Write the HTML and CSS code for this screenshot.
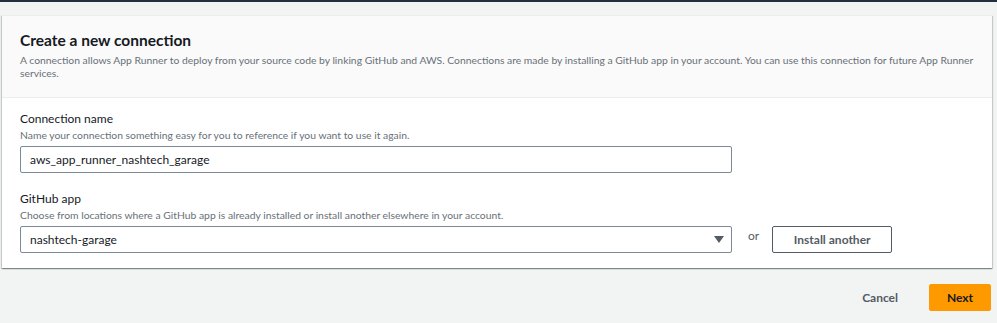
FILE: index.html
```html
<!DOCTYPE html>
<html>
<head>
	<link rel="stylesheet" href="styles.css">
</head>
<body>
<div class="topbar"></div>

<div class="page">
	<div class="card">
		<div class="card-header">
			<h2 class="title">Create a new connection</h2>
			<p class="desc">A connection allows App Runner to deploy from your source code by linking GitHub and AWS. Connections are made by installing a GitHub app in your account. You can use this connection for future App Runner services.</p>
		</div>

		<div class="card-body">
			<div class="field">
				<label class="label" for="conn_name">Connection name</label>
				<div class="hint">Name your connection something easy for you to reference if you want to use it again.</div>
				<input class="input" id="conn_name" type="text" value="aws_app_runner_nashtech_garage">
			</div>

			<div class="field">
				<div class="label">GitHub app</div>
				<div class="hint">Choose from locations where a GitHub app is already installed or install another elsewhere in your account.</div>
				<div class="app-row">
					<div class="select">
						<span>nashtech-garage</span>
						<svg class="caret" width="10" height="7" viewBox="0 0 10 7"><path d="M0 0h10L5 7z" fill="#545b64"/></svg>
					</div>
					<span class="or">or</span>
					<button class="btn btn-normal">Install another</button>
				</div>
			</div>
		</div>
	</div>

	<div class="actions">
		<button class="btn btn-link">Cancel</button>
		<button class="btn btn-primary">Next</button>
	</div>
</div>
</body>
</html>
```

FILE: styles.css
```css
body {
  margin: 0;
  background: #f2f3f3;
  font-family: Lato, "Liberation Sans", sans-serif;
  color: #16191f;
}

.topbar {
  height: 2px;
  background: #232f3e;
}

.page {
  padding: 13px 5px 0 2px;
}

.card {
  background: #fff;
  border-top: 1px solid #eaeded;
  box-shadow: 0 1px 1px 0 rgba(0, 28, 36, .3), 1px 1px 1px 0 rgba(0, 28, 36, .15), -1px 1px 1px 0 rgba(0, 28, 36, .15);
}

.card-header {
  background: #fafafa;
  border-bottom: 1px solid #eaeded;
  padding: 14px 18px 17px;
}

.title {
  margin: 0 0 4px;
  font-size: 15.5px;
  line-height: 20px;
  font-weight: 700;
}

.desc {
  margin: 0;
  font-size: 10.35px;
  line-height: 13px;
  color: #687078;
}

.card-body {
  padding: 12px 18px 15px;
}

.field + .field {
  margin-top: 17px;
}

.label {
  display: block;
  font-size: 12px;
  line-height: 18px;
}

.hint {
  font-size: 10.35px;
  line-height: 14px;
  color: #687078;
  margin-bottom: 4px;
}

.input, .select {
  box-sizing: border-box;
  width: 712px;
  height: 27px;
  border: 1px solid #7d8998;
  border-radius: 2px;
  padding: 0 9px;
  font-family: inherit;
  font-size: 12px;
  color: #16191f;
  background: #fff;
}

.input {
  display: block;
  outline: none;
}

.app-row {
  display: flex;
  align-items: flex-start;
}

.select {
  display: flex;
  align-items: center;
  justify-content: space-between;
  padding-right: 7px;
}

.or {
  font-size: 12px;
  line-height: 20px;
  color: #545b64;
  margin: 0 13px 0 16px;
}

.btn {
  font-family: inherit;
  font-size: 12px;
  font-weight: 700;
  border-radius: 2px;
  height: 27px;
  cursor: pointer;
}

.btn-normal {
  width: 120px;
  background: #fff;
  border: 1px solid #545b64;
  color: #545b64;
}

.actions {
  display: flex;
  justify-content: flex-end;
  gap: 12px;
  margin-top: 16px;
}

.btn-link {
  background: none;
  border: none;
  color: #545b64;
  padding: 0 19px;
}

.btn-primary {
  width: 62px;
  background: #ff9900;
  border: 1px solid #ff9900;
  color: #16191f;
  margin-right: 1px;
}
```
